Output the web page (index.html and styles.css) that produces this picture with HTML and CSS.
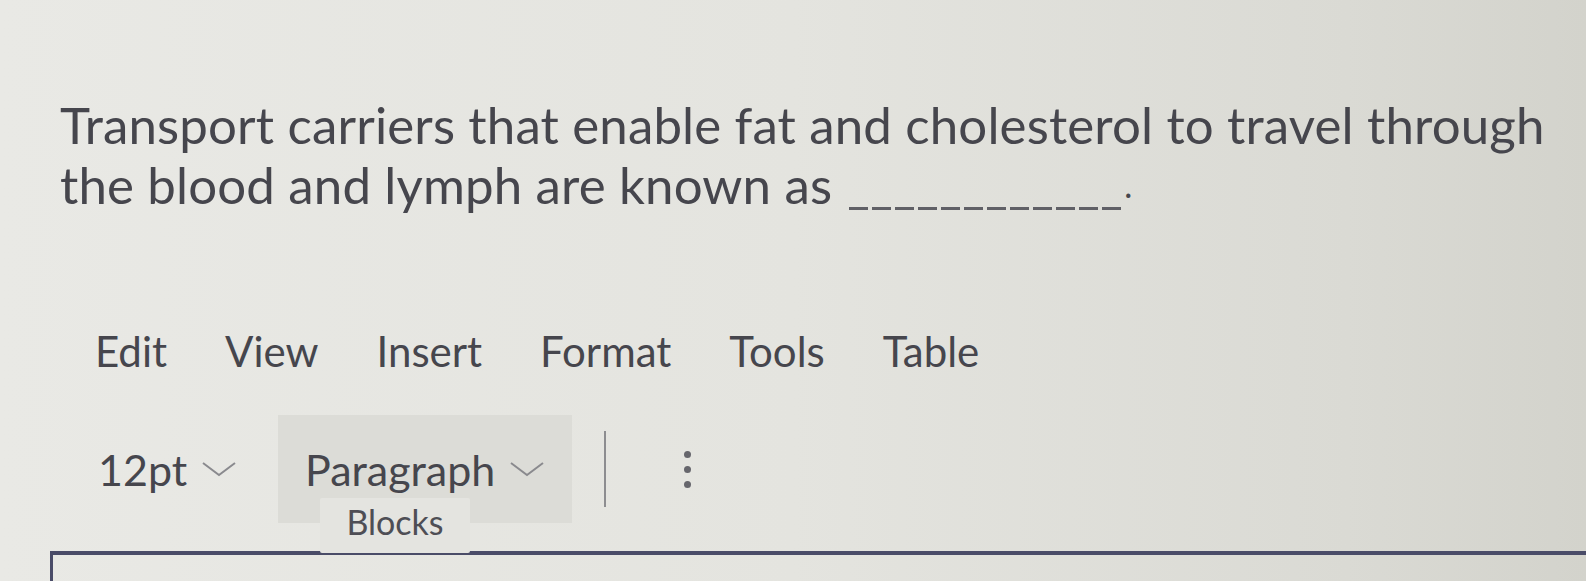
FILE: index.html
```html
<!DOCTYPE html>
<html>
<head>
<meta charset="utf-8">
<link rel="stylesheet" href="styles.css">
</head>
<body>
<div class="page">
  <p class="question">Transport carriers that enable fat and cholesterol to travel through<br>the blood and lymph are known as <span class="blank"></span><span class="dot">.</span></p>
  <nav class="menubar">
    <span>Edit</span><span>View</span><span>Insert</span><span>Format</span><span>Tools</span><span>Table</span>
  </nav>
  <div class="toolbar">
    <div class="tool size">12pt <svg class="chev" viewBox="0 0 36 18"><path d="M2 3 L18 15 L34 3" fill="none" stroke="#8a8a8e" stroke-width="2"/></svg></div>
    <div class="tool para">Paragraph <svg class="chev" viewBox="0 0 36 18"><path d="M2 3 L18 15 L34 3" fill="none" stroke="#8a8a8e" stroke-width="2"/></svg>
      <div class="tooltip">Blocks</div>
    </div>
    <div class="sep"></div>
    <div class="more"><i></i><i></i><i></i></div>
  </div>
  <div class="editor"></div>
</div>
</body>
</html>
```
FILE: styles.css
```css
html, body {
  margin: 0;
  height: 100%;
}
body {
  background: linear-gradient(90deg, #e9e9e5 0%, #e4e4df 50%, #dadad4 85%, #d3d3cc 100%);
  font-family: Lato, "Open Sans", sans-serif;
  color: #46464d;
  overflow: hidden;
}
.page {
  padding: 0 0 0 60px;
}
.question {
  margin: 0;
  padding-top: 95px;
  font-size: 51px;
  line-height: 60px;
  letter-spacing: 0.15px;
}
.blank {
  display: inline-block;
  width: 274px;
  height: 3px;
  margin-left: 4px;
  vertical-align: -6px;
  background: repeating-linear-gradient(90deg, #606066 0 19px, transparent 19px 23px);
}
.dot {
  font-size: 34px;
  vertical-align: 6px;
  margin-left: 1px;
}
.menubar {
  display: flex;
  gap: 58px;
  padding-left: 35px;
  margin-top: 111px;
  font-size: 42px;
  line-height: 50px;
}
.toolbar {
  display: flex;
  align-items: center;
  margin-top: 39px;
  padding-left: 38px;
  height: 108px;
  font-size: 43px;
}
.tool {
  display: flex;
  align-items: center;
  gap: 14px;
  height: 100%;
}
.chev {
  width: 36px;
  height: 18px;
}
.size {
  width: 180px;
}
.para {
  position: relative;
  background: #dcdcd7;
  padding: 0 26px 0 27px;
  height: 108px;
  width: 241px;
}
.tooltip {
  position: absolute;
  left: 42px;
  top: 83px;
  width: 150px;
  height: 55px;
  background: #e4e4e0;
  font-size: 34px;
  line-height: 48px;
  text-align: center;
  color: #4e4e55;
  z-index: 2;
  border-radius: 2px;
}
.sep {
  width: 2px;
  height: 76px;
  background: #8d8d90;
  margin-left: 32px;
}
.more {
  display: flex;
  flex-direction: column;
  gap: 8px;
  margin-left: 78px;
}
.more i {
  display: block;
  width: 7px;
  height: 7px;
  border-radius: 50%;
  background: #66666c;
}
.editor {
  margin-top: 28px;
  margin-left: -10px;
  height: 30px;
  border-top: 4px solid #4a4c68;
  border-left: 3px solid #4a4c68;
}
```
